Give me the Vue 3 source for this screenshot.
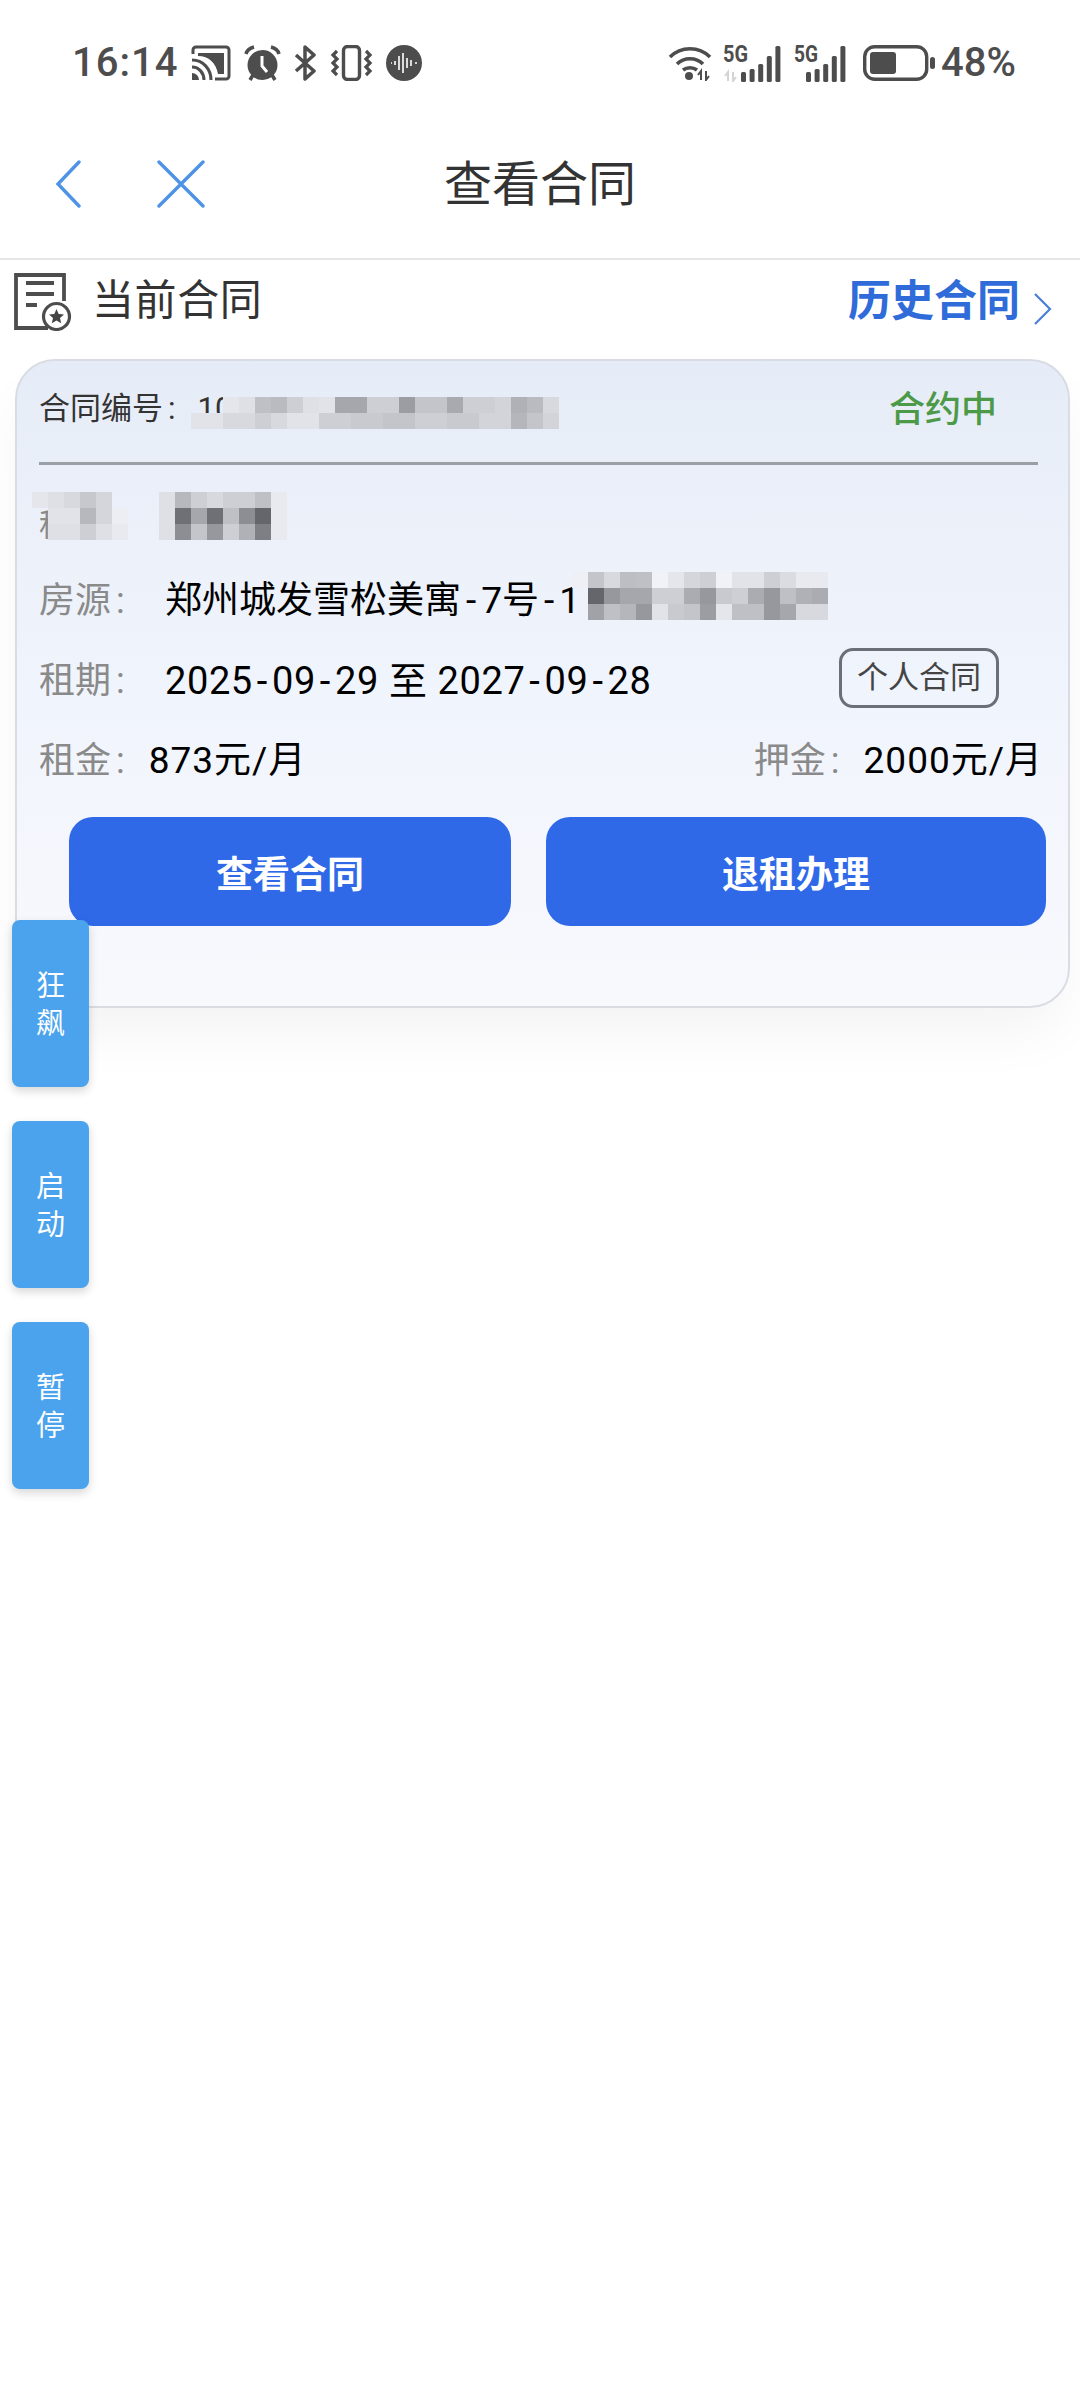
<template>
  <div class="page">
    <div class="status">
      <div class="status-left">
        <span class="time">16:14</span>
        <svg class="ic-cast" width="40" height="36" viewBox="0 0 40 36">
          <path d="M2 9V5a3 3 0 0 1 3-3h30a3 3 0 0 1 3 3v26a3 3 0 0 1-3 3H24" fill="none" stroke="#4d4d4d" stroke-width="3" />
          <path d="M7 8h26v21h-6C25 18 18 11 7 11z" fill="#4d4d4d" />
          <path d="M1 15c11 0 19 9 19 20M1 22c7 0 12 6 12 13" fill="none" stroke="#4d4d4d" stroke-width="3" />
          <path d="M1 28a7 7 0 0 1 7 7H1z" fill="#4d4d4d" />
        </svg>
        <svg class="ic-alarm" width="37" height="36" viewBox="0 0 37 36">
          <circle cx="18.5" cy="20" r="15" fill="#4d4d4d" />
          <path d="M18 11v10l5 6" fill="none" stroke="#fff" stroke-width="3" />
          <path d="M2 9c1-4 4-6 8-7M35 9c-1-4-4-6-8-7M9 30l-3 5M28 30l3 5" fill="none" stroke="#4d4d4d" stroke-width="3.5" />
        </svg>
        <svg class="ic-bt" width="23" height="36" viewBox="0 0 23 36">
          <path d="M2 10l18 16-9 8V2l9 8L2 26" fill="none" stroke="#4d4d4d" stroke-width="3.5" stroke-linejoin="round" />
        </svg>
        <svg class="ic-vib" width="43" height="36" viewBox="0 0 43 36">
          <rect x="13.500" y="1.500" width="16" height="33" rx="4" fill="none" stroke="#4d4d4d" stroke-width="3.4" />
          <path d="M7 6L3 10l4 4-4 4 4 4-4 4 4 4M36 6l4 4-4 4 4 4-4 4 4 4-4 4" fill="none" stroke="#4d4d4d" stroke-width="3.200" />
        </svg>
        <svg class="ic-wave" width="36" height="36" viewBox="0 0 36 36">
          <circle cx="18" cy="18" r="18" fill="#4d4d4d" />
          <path d="M5 18h1M9 16v4M13 11v14M17 8v20M21 13v10M25 15v6M29 18h2" stroke="#fff" stroke-width="1.6" />
        </svg>
      </div>
      <div class="status-right">
        <svg class="ic-wifi" width="44" height="36" viewBox="0 0 44 36">
          <path d="M2 12c11-11 29-11 40 0M9 19c7-7 19-7 26 0M15 25c4-3 10-3 14 0" fill="none" stroke="#4d4d4d" stroke-width="3.6" />
          <circle cx="21" cy="31" r="4" fill="#4d4d4d" />
          <path d="M33 35v-9l-3 4M38 26v9l3-4" fill="none" stroke="#4d4d4d" stroke-width="2" />
        </svg>
        <svg class="ic-sig" width="60" height="45" viewBox="0 -8 60 45">
          <text x="0" y="17" font-family="Roboto" font-weight="700" font-size="24" fill="#4d4d4d" textLength="25" lengthAdjust="spacingAndGlyphs">5G</text>
          <path d="M5 36v-9l-3 4M10 27v9l3-4" fill="none" stroke="#d4d4d4" stroke-width="2" />
          <rect v-for="b in bars" :key="b.x" :x="b.x + 18" :y="37 - b.h" width="5" :height="b.h" rx="1.5" fill="#4d4d4d" />
        </svg>
        <svg class="ic-sig2" width="54" height="45" viewBox="0 -8 54 45">
          <text x="0" y="17" font-family="Roboto" font-weight="700" font-size="24" fill="#4d4d4d" textLength="24" lengthAdjust="spacingAndGlyphs">5G</text>
          <rect v-for="b in bars" :key="b.x" :x="b.x + 12" :y="37 - b.h" width="5" :height="b.h" rx="1.5" fill="#4d4d4d" />
        </svg>
        <svg class="ic-batt" width="72" height="36" viewBox="0 0 72 36">
          <rect x="1.7" y="1.7" width="62" height="32.6" rx="10" fill="none" stroke="#4d4d4d" stroke-width="3.4" />
          <rect x="7" y="7" width="26" height="22" rx="3" fill="#4d4d4d" />
          <rect x="67" y="12" width="5" height="12" rx="2.5" fill="#4d4d4d" />
        </svg>
        <span class="pct">48%</span>
      </div>
    </div>

    <div class="nav">
      <div class="nav-left">
        <svg width="26" height="48" viewBox="0 0 26 48">
          <path d="M24 2L3 24l21 22" fill="none" stroke="#4f93e6" stroke-width="3.4" stroke-linecap="round" />
        </svg>
        <svg width="48" height="48" viewBox="0 0 48 48">
          <path d="M2 2l44 44M46 2L2 46" fill="none" stroke="#4f93e6" stroke-width="3.4" stroke-linecap="round" />
        </svg>
      </div>
      <div class="nav-title">查看合同</div>
    </div>

    <div class="section">
      <div class="section-left">
        <svg width="58" height="58" viewBox="0 0 58 58">
          <path d="M34 55H2V2h48v26" fill="none" stroke="#4d4d4d" stroke-width="3.8" />
          <path d="M12 10h28M12 21h28M12 32h11" stroke="#4d4d4d" stroke-width="3.8" />
          <circle cx="42.5" cy="43.5" r="13" fill="#fff" stroke="#4d4d4d" stroke-width="3.2" />
          <path d="M42.5 36l2.2 5 5.3.5-4 3.5 1.2 5.2-4.700-2.800-4.700 2.800 1.200-5.200-4-3.500 5.300-.5z" fill="#444" />
        </svg>
        <span class="section-title">当前合同</span>
      </div>
      <div class="section-right">
        <span class="history">历史合同</span>
        <svg width="19" height="34" viewBox="0 0 19 34">
          <path d="M2 2l15 15L2 32" fill="none" stroke="#4a7fd8" stroke-width="2.2" />
        </svg>
      </div>
    </div>

    <div class="card">
      <div class="card-head">
        <span class="no">合同编号<i>:</i><span class="no-val">10</span></span>
        <span class="state">合约中</span>
      </div>
      <div class="line"></div>
      <div class="row first"><span class="label small">租</span></div>
      <div class="row">
        <span class="label wide">房源<i>:</i></span>
        <span class="val">郑州城发雪松美寓<i class="dash">-</i>7号<i class="dash">-</i>1</span>
      </div>
      <div class="row">
        <span class="label wide">租期<i>:</i></span>
        <span class="val date">2025<i class="dash">-</i>09<i class="dash">-</i>29 至 2027<i class="dash">-</i>09<i class="dash">-</i>28</span>
        <span class="tag">个人合同</span>
      </div>
      <div class="row between">
        <div class="pair">
          <span class="label">租金<i>:</i></span>
          <span class="val rent">873元/月</span>
        </div>
        <div class="pair">
          <span class="label">押金<i>:</i></span>
          <span class="val rent">2000元/月</span>
        </div>
      </div>
      <div class="actions">
        <button class="btn view">查看合同</button>
        <button class="btn out">退租办理</button>
      </div>

      <div
        v-for="m in mosaics"
        :key="m.id"
        class="mosaic"
        :style="{ left: m.x + 'px', top: m.y + 'px' }"
      >
        <div v-for="(r, i) in m.rows" :key="i" class="m-row">
          <span v-for="(g, j) in r" :key="j" class="m-cell" :style="{ background: cellColor(g) }"></span>
        </div>
      </div>
    </div>

    <div class="float-btns">
      <div v-for="f in floats" :key="f" class="float">
        <span>{{ f[0] }}</span>
        <span>{{ f[1] }}</span>
      </div>
    </div>
  </div>
</template>

<script setup>
const bars = [
  { x: 0, h: 10 },
  { x: 8.6, h: 13 },
  { x: 17.2, h: 18 },
  { x: 25.8, h: 26 },
  { x: 34.4, h: 36 }
]

const floats = ['狂飙', '启动', '暂停']

// gray levels read off the blurred parts of the reference, 0 leaves the cell empty
// x and y are measured from the card's padding box
const mosaics = [
  {
    id: 'no',
    x: 174,
    y: 36,
    rows: [
      [0, 0, 228, 222, 190, 185, 205, 222, 225, 165, 165, 205, 205, 155, 195, 195, 168, 205, 205, 210, 175, 185, 215],
      [225, 225, 215, 215, 205, 215, 225, 225, 205, 205, 200, 200, 195, 195, 205, 205, 200, 200, 210, 210, 180, 195, 210]
    ]
  },
  {
    id: 'a',
    x: 15,
    y: 131,
    rows: [
      [228, 222, 215, 198, 212, 0],
      [0, 225, 225, 182, 212, 236],
      [0, 222, 222, 205, 222, 232]
    ]
  },
  {
    id: 'b',
    x: 142,
    y: 131,
    rows: [
      [222, 182, 205, 215, 205, 205, 190, 232],
      [222, 110, 165, 110, 190, 140, 100, 232],
      [222, 140, 195, 150, 205, 175, 125, 232]
    ]
  },
  {
    id: 'c',
    x: 555,
    y: 211,
    rows: [
      [238, 195, 215, 188, 190, 240, 228, 212, 205, 240, 225, 225, 205, 218, 232, 232],
      [0, 100, 150, 165, 165, 205, 205, 170, 150, 200, 205, 170, 150, 190, 175, 170],
      [0, 160, 190, 180, 150, 225, 200, 195, 155, 228, 190, 190, 150, 165, 215, 215]
    ]
  }
]

const cellColor = (g) => (g ? `rgb(${g}, ${g + 2}, ${Math.min(g + 8, 255)})` : 'transparent')
</script>

<style>
body {
  background: #fff;
}
</style>

<style scoped>
.page {
  position: relative;
  width: 1080px;
  height: 2382px;
  overflow: hidden;
  background: #fff;
  font-family: Roboto, "Noto Sans CJK SC", sans-serif;
}

.status {
  height: 90px;
  box-sizing: border-box;
  padding: 45px 64px 0 72px;
  display: flex;
  justify-content: space-between;
}

.status-left,
.status-right {
  display: flex;
  align-items: flex-start;
  height: 36px;
}

.time,
.pct {
  font-size: 40px;
  font-weight: 500;
  line-height: 36px;
  color: #4d4d4d;
  letter-spacing: 1px;
}

.pct {
  letter-spacing: 0;
  margin-left: 6px;
}

.ic-cast,
.ic-alarm,
.ic-bt,
.ic-vib,
.ic-wave {
  margin-left: 13px;
}

.ic-sig,
.ic-sig2 {
  margin-top: -8px;
  margin-left: 11px;
}

.ic-batt {
  margin-left: 15px;
}

.nav {
  position: relative;
  height: 170px;
  box-sizing: border-box;
  padding: 70px 0 0 55px;
  border-bottom: 2px solid #e6e6e6;
}

.nav-left {
  display: flex;
  gap: 76px;
  align-items: center;
  height: 48px;
}

.nav-title {
  position: absolute;
  left: 0;
  right: 0;
  top: 65px;
  text-align: center;
  font-size: 48px;
  line-height: 60px;
  color: #333;
}

.section {
  height: 99px;
  box-sizing: border-box;
  padding: 13px 28px 0 14px;
  display: flex;
  justify-content: space-between;
}

.section-left {
  display: flex;
  gap: 20px;
}

.section-title {
  font-size: 42px;
  letter-spacing: 0.6px;
  line-height: 56px;
  color: #333;
}

.section-right {
  display: flex;
  gap: 13px;
}

.history {
  font-size: 43px;
  font-weight: 700;
  line-height: 56px;
  color: #2f6bd9;
}

.section-right svg {
  margin-top: 19px;
}

.card {
  position: relative;
  box-sizing: border-box;
  width: 1055px;
  height: 649px;
  margin-left: 15px;
  padding: 0 25px 0 22px;
  border: 2px solid #d9dce2;
  border-radius: 40px;
  background: linear-gradient(180deg, #e6ecf7 0%, #f0f4fc 50%, #f8f9fd 100%);
  box-shadow: 0 30px 60px -8px rgba(0, 0, 0, 0.05);
}

.card-head {
  height: 101px;
  box-sizing: border-box;
  padding: 0 46px 12px 0;
  display: flex;
  justify-content: space-between;
  align-items: center;
}

.no {
  font-size: 31px;
  color: #333;
}

.no i {
  font-style: normal;
  margin-left: 5px;
}

.no-val {
  margin-left: 22px;
}

.state {
  font-size: 36px;
  font-weight: 500;
  color: #4c9a48;
}

.line {
  height: 3px;
  margin-right: 5px;
  background: #9a9ea5;
}

.row {
  height: 80px;
  display: flex;
  align-items: center;
  font-size: 37px;
}

.first {
  margin-top: 12px;
}

.between {
  justify-content: space-between;
}

.pair {
  display: flex;
  align-items: center;
}

.label {
  font-size: 36px;
  color: #8a8a8a;
}

.label i {
  font-style: normal;
  margin-left: 5px;
}

.label.wide {
  width: 126px;
}

.label.small {
  margin-top: 10px;
  font-size: 32px;
}

.val {
  color: #000;
}

.val i.dash {
  font-style: normal;
  margin: 0 5px;
}

.val.date {
  font-size: 38px;
  letter-spacing: 0.6px;
}

.val.date i.dash {
  margin: 0 4px;
}

.val.rent {
  margin-left: 24px;
  letter-spacing: 1px;
}

.tag {
  box-sizing: border-box;
  width: 160px;
  height: 60px;
  margin-top: 2px;
  margin-left: auto;
  margin-right: 44px;
  border: 3px solid #6b7078;
  border-radius: 14px;
  font-size: 31px;
  line-height: 54px;
  text-align: center;
  color: #444;
}

.actions {
  margin: 20px 0 0 30px;
  display: flex;
  gap: 35px;
}

.btn {
  flex: none;
  height: 109px;
  border: 0;
  border-radius: 24px;
  background: #2f69e8;
  color: #fff;
  font-family: inherit;
  font-size: 37px;
  font-weight: 700;
}

.view {
  width: 442px;
}

.out {
  width: 500px;
}

.mosaic {
  position: absolute;
}

.m-row {
  display: flex;
}

.m-cell {
  display: block;
  width: 16px;
  height: 16px;
}

.float-btns {
  position: absolute;
  left: 12px;
  top: 920px;
  display: flex;
  flex-direction: column;
  gap: 34px;
}

.float {
  box-sizing: border-box;
  width: 77px;
  height: 167px;
  padding-top: 3px;
  border-radius: 8px;
  background: #4aa3ec;
  box-shadow: 0 4px 10px rgba(0, 0, 0, 0.16);
  display: flex;
  flex-direction: column;
  align-items: center;
  justify-content: center;
  color: #fff;
  font-size: 29px;
  line-height: 38px;
}
</style>
